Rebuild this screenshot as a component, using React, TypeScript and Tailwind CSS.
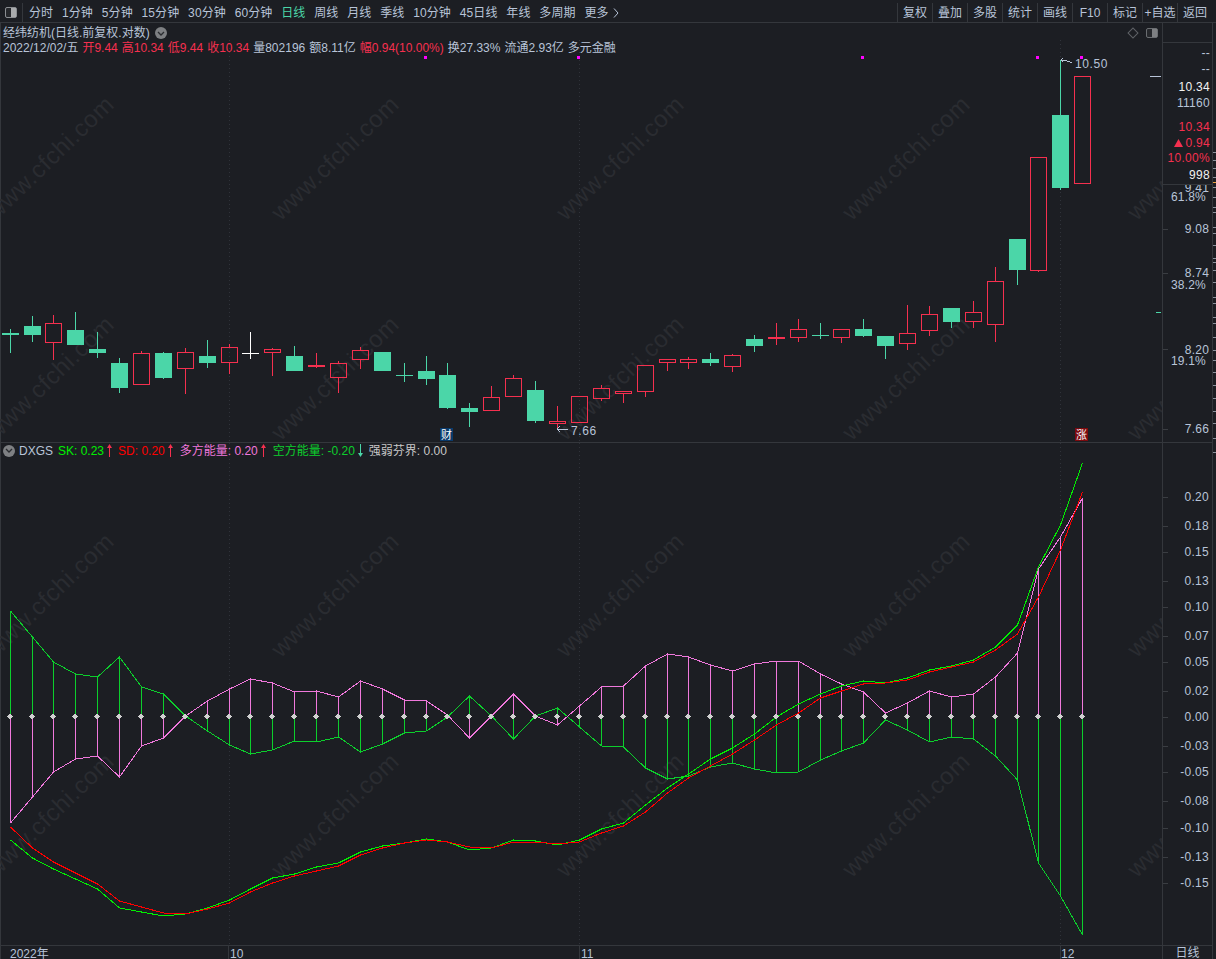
import React from "react";

const XS = [10.5,32.5,53.5,75.5,97.5,119.5,141.5,163.5,185.5,207.5,229.5,250.5,272.5,294.5,316.5,338.5,360.5,382.5,404.5,426.5,447.5,469.5,491.5,513.5,535.5,557.5,579.5,601.5,623.5,645.5,667.5,688.5,710.5,732.5,754.5,776.5,798.5,820.5,841.5,863.5,885.5,907.5,929.5,951.5,973.5,995.5,1017.5,1038.5,1060.5,1082.5];

// [high, low, bodyTop, bodyBottom, kind] kind: g green, r red, w white
type C = [number, number, number, number, string];
const CANDLES: C[] = [
  [329,353,333,335,"g"],[316,342,326,335,"g"],[315,360,323,343,"r"],[312,345,330,345,"g"],[332,358,349,353,"g"],
  [358,393,363,388,"g"],[351,385,353,385,"r"],[352,379,353,378,"g"],[348,394,352,369,"r"],[340,368,356,363,"g"],
  [344,374,347,363,"r"],[332,359,353,353,"w"],[348,376,349,353,"r"],[346,371,356,371,"g"],[353,368,365,367,"r"],
  [361,393,363,378,"r"],[347,369,350,360,"r"],[352,371,352,371,"g"],[363,382,375,375,"g"],[356,385,371,379,"g"],
  [363,409,375,408,"g"],[403,427,408,412,"g"],[386,411,397,411,"r"],[375,397,378,397,"r"],[381,423,390,421,"g"],
  [406,428,421,424,"r"],[396,423,396,423,"r"],[385,401,388,399,"r"],[391,403,391,394,"r"],[365,397,365,392,"r"],
  [359,371,359,363,"r"],[357,369,359,363,"r"],[353,366,359,363,"g"],[354,372,355,367,"r"],[335,352,339,346,"g"],
  [323,345,337,339,"r"],[319,342,329,338,"r"],[323,339,335,335,"g"],[329,343,329,338,"r"],[319,337,329,336,"g"],
  [336,359,336,346,"g"],[305,350,333,344,"r"],[306,336,314,331,"r"],[308,328,308,322,"g"],[301,328,312,322,"r"],
  [267,342,281,325,"r"],[239,285,239,270,"g"],[157,272,157,271,"r"],[60,190,115,188,"g"],[76,184,76,184,"r"],
];

const GREEN = "#4bd6a8";
const RED = "#f5304f";
const DOJI = new Set([11, 18, 37]);

const PINK = [823,797,772,759,756,777,746,738,716,701,689,679,683,692,691,697,681,689,700,701,715,738,716,694,716,725,706,687,686,666,654,657,665,671,664,661,661,674,684,692,713,703,691,697,694,677,653,569,537,498];
const GRN =  [611,637,662,674,677,657,687,694,716,731,745,754,750,741,742,737,752,744,733,731,717,696,716,739,716,708,727,746,747,768,779,776,767,763,769,773,772,760,751,743,720,730,742,737,739,756,780,863,896,935];
const SK = [840,858,869,879,889,908,912,916,914,908,900,889,878,874,867,863,852,846,843,839,842,850,848,840,841,845,840,829,823,805,788,774,759,748,734,717,704,694,686,681,683,678,670,666,660,647,625,567,525,463];
const SD = [827,848,862,873,884,901,907,913,914,909,903,892,883,876,871,866,855,848,843,840,842,847,848,842,842,844,842,833,826,812,793,778,766,754,740,725,713,698,691,684,683,680,672,667,662,650,634,597,550,492];

const WM_X = [-50, 235, 520, 806, 1091];
const WM_Y = [158, 378, 595, 815];

const poly = (ys: number[]) => XS.map((x, i) => `${x},${ys[i]}`).join(" ");

function Watermarks() {
  return (
    <g>
      {WM_Y.flatMap((y) =>
        WM_X.map((x) => (
          <text
            key={`${x}-${y}`}
            x={x + 100}
            y={y + 8}
            textAnchor="middle"
            transform={`rotate(-44 ${x + 100} ${y})`}
            fill="#2a2c31"
            fontSize="24"
            fontFamily="'Liberation Sans', sans-serif"
            letterSpacing="0.6"
          >
            www.cfchi.com
          </text>
        ))
      )}
    </g>
  );
}

function KChart() {
  return (
    <svg width="1162" height="402" viewBox="0 40 1162 402" className="block">
      <Watermarks />
      {[229.5, 579.5, 1060.5].map((x) => (
        <line key={x} x1={x} x2={x} y1={40} y2={442} stroke="#30333a" strokeDasharray="1 3" shapeRendering="crispEdges" />
      ))}
      {[425.5, 578.5, 862.5, 1037.5, 1081.5].map((x) => (
        <rect key={x} x={x - 1.5} y={56} width={3} height={3} fill="#ff00ff" />
      ))}
      {CANDLES.map(([h, l, t, b, k], i) => {
        const x = XS[i];
        const c = k === "g" ? GREEN : k === "r" ? RED : "#ffffff";
        const bx = Math.floor(x) - 8;
        return (
          <g key={i} shapeRendering="crispEdges">
            {DOJI.has(i) ? (
              <>
                <line x1={x} x2={x} y1={h} y2={l} stroke={c} />
                <line x1={bx} x2={bx + 17} y1={t + 0.5} y2={t + 0.5} stroke={c} />
              </>
            ) : k === "g" ? (
              <>
                <line x1={x} x2={x} y1={h} y2={l} stroke={c} />
                <rect x={bx} y={t} width={17} height={b - t} fill={c} />
              </>
            ) : i === 14 ? (
              <>
                <line x1={x} x2={x} y1={h} y2={l} stroke={c} />
                <rect x={bx} y={t} width={17} height={2} fill={c} />
              </>
            ) : (
              <>
                <line x1={x} x2={x} y1={h} y2={t} stroke={c} />
                <line x1={x} x2={x} y1={b} y2={l} stroke={c} />
                <rect x={bx + 0.5} y={t + 0.5} width={16} height={b - t - 1} fill="none" stroke={c} />
              </>
            )}
          </g>
        );
      })}
      <g stroke="#b8c4d8" fill="none" shapeRendering="crispEdges">
        <polyline points="1063,58 1061,60 1063,62" />
        <polyline points="1061,60 1065,60 1072,63" />
        <polyline points="557,429 568,429" />
        <polyline points="560,426 557,429 560,432" />
        <line x1="1150" x2="1161" y1="76.5" y2="76.5" />
      </g>
      <line x1="1156" x2="1161" y1="312.5" y2="312.5" stroke={GREEN} />
      <text x="1075" y="68" fill="#b8c4d8" fontSize="12" fontFamily="'Liberation Sans', sans-serif" letterSpacing="0.6">10.50</text>
      <text x="571" y="435" fill="#b8c4d8" fontSize="12" fontFamily="'Liberation Sans', sans-serif" letterSpacing="0.6">7.66</text>
      <g fontFamily="'Noto Sans CJK SC', sans-serif" fontSize="11" textAnchor="middle">
        <rect x="440" y="428" width="13" height="13" fill="#0a3a6b" />
        <text x="446.5" y="439" fill="#ffffff">财</text>
        <rect x="1075" y="428" width="13" height="13" fill="#7c0a0e" />
        <text x="1081.5" y="439" fill="#ffffff">涨</text>
      </g>
    </svg>
  );
}

function IndicatorChart() {
  return (
    <svg width="1162" height="502" viewBox="0 443 1162 502" className="block">
      <Watermarks />
      {[229.5, 579.5, 1060.5].map((x) => (
        <line key={x} x1={x} x2={x} y1={443} y2={945} stroke="#30333a" strokeDasharray="1 3" shapeRendering="crispEdges" />
      ))}
      <g shapeRendering="crispEdges">
        {XS.map((x, i) => (
          <g key={i}>
            <line x1={x} x2={x} y1={716} y2={PINK[i]} stroke="#f078dc" />
            <line x1={x} x2={x} y1={716} y2={GRN[i]} stroke="#0ccf2c" />
          </g>
        ))}
        <polyline points={poly(GRN)} fill="none" stroke="#0ccf2c" />
        <polyline points={poly(PINK)} fill="none" stroke="#f078dc" />
        <polyline points={poly(SK)} fill="none" stroke="#00f000" />
        <polyline points={poly(SD)} fill="none" stroke="#ff0000" />
        {XS.map((x) => (
          <g key={x} fill="#d0d0d0">
            <rect x={Math.floor(x) - 3} y={716} width={6} height={1} />
            <rect x={Math.floor(x) - 2} y={715} width={4} height={3} />
            <rect x={Math.floor(x) - 1} y={714} width={2} height={5} />
          </g>
        ))}
      </g>
    </svg>
  );
}

function Arrow({ color, down }: { color: string; down?: boolean }) {
  return (
    <svg width="5" height="13" viewBox="0 0 5 13" className={down ? "ml-[3px] rotate-180" : "ml-[3px]"}>
      <line x1="2.5" x2="2.5" y1="2" y2="13" stroke={color} />
      <polygon points="2.5,0 5,4 0,4" fill={color} />
    </svg>
  );
}

function Chevron() {
  return (
    <span className="flex h-[12px] w-[12px] shrink-0 items-center justify-center rounded-full bg-[#7e8083]">
      <svg width="8" height="5" viewBox="0 0 8 5">
        <polyline points="1,1 4,4 7,1" fill="none" stroke="#2a2c30" strokeWidth="1.3" />
      </svg>
    </span>
  );
}

const TOP_LEFT = ["分时","1分钟","5分钟","15分钟","30分钟","60分钟","日线","周线","月线","季线","10分钟","45日线","年线","多周期","更多"];
const TOP_RIGHT = ["复权","叠加","多股","统计","画线","F10","标记","+自选","返回"];

const TOP_AXIS: [string, number, string][] = [
  ["--", 53, "#b8c4d8"], ["--", 69, "#b8c4d8"], ["10.34", 87, "#f2f2f2"], ["11160", 103, "#b8c4d8"],
  ["10.34", 127, RED], ["0.94", 143, RED], ["10.00%", 158, RED], ["998", 175, "#f2f2f2"],
];
const PRICE_AXIS: [string, number, number][] = [
  ["9.41", 188, 3], ["61.8%", 197, 6], ["9.08", 229, 3], ["8.74", 273, 3], ["38.2%", 285, 6], ["8.20", 350, 3], ["19.1%", 361, 6], ["7.66", 429, 3],
];
const IND_AXIS: [string, number][] = [
  ["0.20",497],["0.18",526],["0.15",552],["0.13",581],["0.10",607],["0.07",636],["0.05",662],["0.02",691],["0.00",717],
  ["-0.03",746],["-0.05",772],["-0.08",801],["-0.10",828],["-0.13",857],["-0.15",883],
];
const RULER = [92,100,108,117,127,137,147,152,167,173,185,198,202,210,222,237,243,257,263,277,290,300,312,325,338,351,363,378,392];

function SubTick({ y }: { y: number }) {
  return <span className="absolute left-0 h-px w-[5px] bg-[#3a3d42]" style={{ top: y }} />;
}

export default function App() {
  return (
    <div
      className="flex h-[959px] w-[1216px] flex-col overflow-hidden bg-[#1c1e23] text-[12px] leading-none text-[#b8c4d8]"
      style={{ fontFamily: "'Liberation Sans', 'Noto Sans CJK SC', sans-serif" }}
    >
      {/* Toolbar */}
      <div className="flex h-[23px] shrink-0 items-end border-b border-[#34373c]">
        <div className="flex h-[19px] w-[23px] shrink-0 items-center justify-center border-r border-[#34373c]">
          <span className="flex h-[11px] w-[12px] justify-end rounded-[2px] border border-[#8b8e92] bg-[#26282c]">
            <span className="h-full w-[5px] bg-[#a9abad]" />
          </span>
        </div>
        <div className="flex h-[19px] flex-1 items-center gap-[8.8px] pl-[6px] tracking-[0.1px]">
          {TOP_LEFT.map((t) => (
            <span key={t} className={t === "日线" ? "text-[#4bd6a8]" : ""}>{t}</span>
          ))}
          <svg width="6" height="10" viewBox="0 0 6 10" className="-ml-[4px]">
            <polyline points="1,0.5 5,5 1,9.5" fill="none" stroke="#b8c4d8" />
          </svg>
        </div>
        <div className="flex h-[19px] pr-[4px]">
          {TOP_RIGHT.map((t) => (
            <span key={t} className="flex h-full w-[35px] items-center justify-center border-l border-[#34373c]">{t}</span>
          ))}
        </div>
      </div>

      <div className="flex min-h-0 flex-1">
        {/* Left charts */}
        <div className="flex w-[1162px] shrink-0 flex-col shadow-[inset_1px_0_0_#34373c]">
          <div className="relative h-[420px] shrink-0 border-b border-[#34373c]">
            <div className="absolute left-0 top-0 z-10 flex flex-col gap-[3px] pl-[3px] pt-[4px]">
              <div className="flex items-center gap-[5px]">
                <span>经纬纺机(日线.前复权.对数)</span>
                <Chevron />
              </div>
              <div className="flex gap-[4px] whitespace-nowrap">
                <span>2022/12/02/五</span>
                <span className="text-[#f5304f]">开9.44</span>
                <span className="text-[#f5304f]">高10.34</span>
                <span className="text-[#f5304f]">低9.44</span>
                <span className="text-[#f5304f]">收10.34</span>
                <span>量802196</span>
                <span>额8.11亿</span>
                <span className="text-[#f5304f]">幅0.94(10.00%)</span>
                <span>换27.33%</span>
                <span>流通2.93亿</span>
                <span>多元金融</span>
              </div>
            </div>
            <div className="absolute right-[4px] top-[5px] z-10 flex items-center gap-[9px]">
              <span className="h-[8px] w-[8px] rotate-45 border border-[#5f6266]" />
              <span className="flex h-[10px] w-[12px] justify-end rounded-[2px] border border-[#6a6d71] bg-[#26282c]">
                <span className="h-full w-[5px] bg-[#7e8083]" />
              </span>
            </div>
            <div className="absolute bottom-0 left-0">
              <KChart />
            </div>
          </div>
          <div className="relative min-h-0 flex-1">
            <div className="absolute left-[3px] top-[1px] z-10 flex items-center whitespace-nowrap">
              <Chevron />
              <span className="ml-[4px]">DXGS</span>
              <span className="ml-[5px] flex items-center text-[#00f000]">SK: 0.23<Arrow color="#f5304f" /></span>
              <span className="ml-[6px] flex items-center text-[#ff0000]">SD: 0.20<Arrow color="#f5304f" /></span>
              <span className="ml-[7px] flex items-center text-[#f078dc]">多方能量: 0.20<Arrow color="#f5304f" /></span>
              <span className="ml-[7px] flex items-center text-[#0ccf2c]">空方能量: -0.20<Arrow color="#4bd6a8" down /></span>
              <span className="ml-[6px] text-[#c8c8c8]">强弱芬界: 0.00</span>
            </div>
            <IndicatorChart />
          </div>
          <div className="relative h-[14px] shrink-0 border-t border-[#34373c]">
            <span className="absolute left-[10px] top-[2px]">2022年</span>
            <span className="absolute left-[228px] top-0 h-full border-l border-[#34373c]" />
            <span className="absolute left-[230px] top-[2px]">10</span>
            <span className="absolute left-[579px] top-0 h-full border-l border-[#34373c]" />
            <span className="absolute left-[581px] top-[2px]">11</span>
            <span className="absolute left-[1060px] top-0 h-full border-l border-[#34373c]" />
            <span className="absolute left-[1061px] top-[2px]">12</span>
          </div>
        </div>

        {/* Right axis */}
        <div className="flex w-[51px] shrink-0 flex-col border-x border-[#34373c]">
          <div className="relative h-[420px] shrink-0 overflow-hidden border-b border-[#34373c]">
            <div className="relative z-10 h-[20px] border-b border-[#34373c] bg-[#1c1e23]" />
            <div className="relative z-10 h-[142px] border-b border-[#34373c] bg-[#1c1e23]">
              {TOP_AXIS.map(([t, y, c], i) => (
                <span
                  key={i}
                  className="absolute right-[2px] flex -translate-y-1/2 items-center tracking-[0.3px]"
                  style={{ top: y - 43, color: c }}
                >
                  {t === "0.94" && (
                    <svg width="9" height="8" viewBox="0 0 9 8" className="mr-[2px]">
                      <polygon points="4.5,0 9,8 0,8" fill={RED} />
                    </svg>
                  )}
                  {t}
                </span>
              ))}
            </div>
            {PRICE_AXIS.map(([t, y, r]) => (
              <span key={t} className="absolute -translate-y-1/2 leading-[10px] tracking-[0.2px]" style={{ top: y - 23, right: r }}>{t}</span>
            ))}
            <SubTick y={206} />
            <SubTick y={250} />
            <SubTick y={326} />
            <SubTick y={406} />
          </div>
          <div className="relative min-h-0 flex-1">
            {IND_AXIS.map(([t, y]) => (
              <span key={t} className="absolute right-[3px] -translate-y-1/2 tracking-[0.3px]" style={{ top: y - 443 }}>{t}</span>
            ))}
            {IND_AXIS.map(([t, y]) => (
              <SubTick key={t} y={y - 443} />
            ))}
          </div>
          <div className="flex h-[14px] shrink-0 items-center justify-center border-t border-[#34373c] pt-[1px]">日线</div>
        </div>
        <div className="relative w-[3px] shrink-0">
          {RULER.map((y) => (
            <span key={y} className="absolute left-0 h-px w-[3px] bg-[#8a919c]" style={{ top: y + 60 - 23 }} />
          ))}
          <span className="absolute left-0 top-[159px] h-px w-[3px] bg-[#e8a040]" />
        </div>
      </div>
    </div>
  );
}
